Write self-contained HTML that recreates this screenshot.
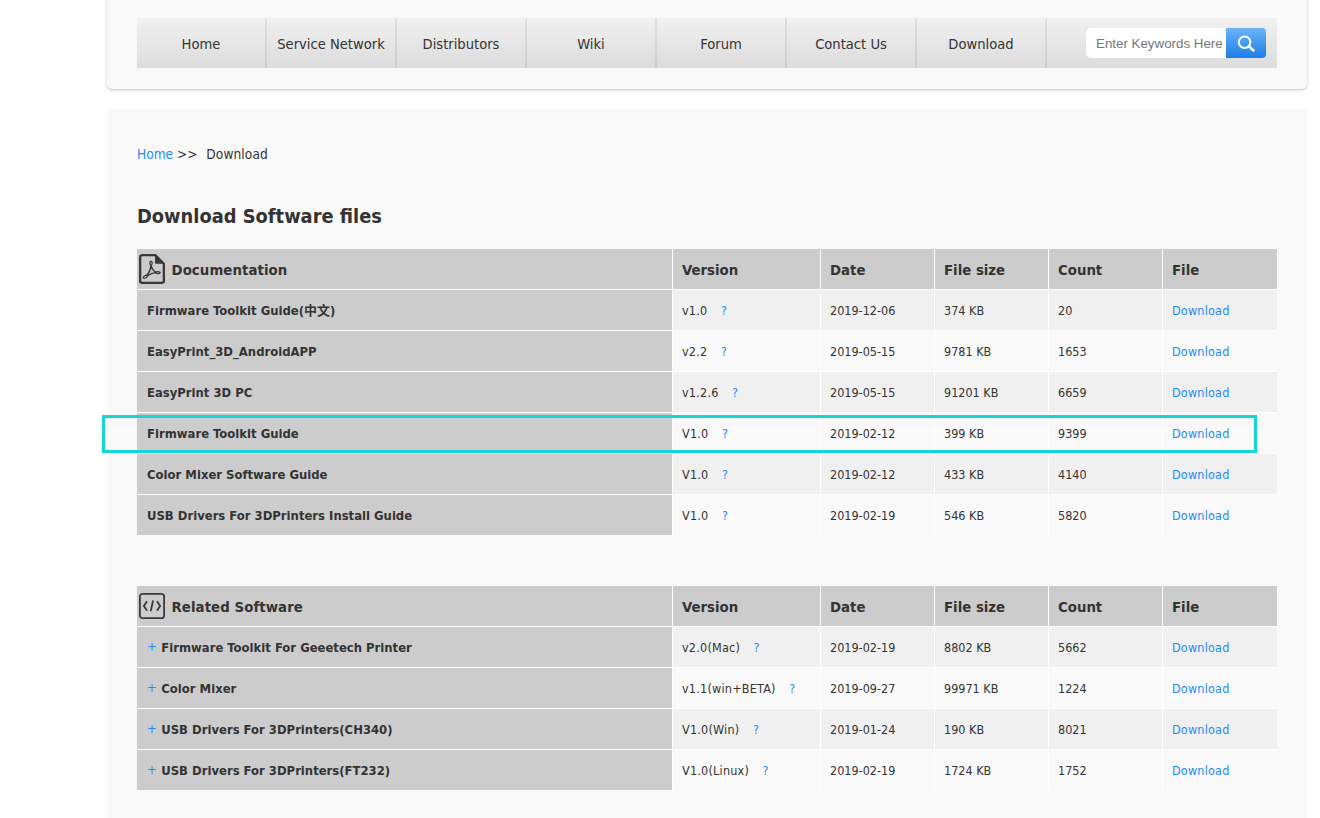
<!DOCTYPE html>
<html lang="en">
<head>
<meta charset="utf-8">
<title>Download Software files</title>
<style>
*{box-sizing:border-box;}
html,body{margin:0;padding:0;background:#fff;}
body{width:1320px;height:818px;overflow:hidden;position:relative;font-family:"DejaVu Sans Condensed","Liberation Sans","Noto Sans CJK SC",sans-serif;color:#333;font-size:13px;}
a{color:#1e8af8;text-decoration:none;}
.top{position:absolute;left:107px;top:-10px;width:1200px;height:99px;background:#f9f9f9;border-radius:0 0 5px 5px;box-shadow:0 1px 3px rgba(0,0,0,.25);}
.nav{position:absolute;left:30px;top:28px;width:1140px;height:50px;background:linear-gradient(#f1f1f1,#dcdcdc);}
.nav ul{list-style:none;margin:0;padding:0;}
.nav li{float:left;width:130px;height:50px;line-height:52px;text-align:center;font-size:14.6px;color:#333;border-right:2px solid rgba(0,0,0,.075);}
.search{position:absolute;left:949px;top:10px;width:180px;height:30px;}
.search .inp{position:absolute;left:0;top:0;width:140px;height:30px;background:#fff;border-radius:5px 0 0 5px;font-family:"Liberation Sans",sans-serif;font-size:13.33px;line-height:30px;color:#777;padding:1px 0 0 10px;white-space:nowrap;overflow:hidden;}
.search .btn{position:absolute;left:140px;top:0;width:40px;height:30px;border-radius:0 4px 4px 0;background:linear-gradient(#6db3f9,#1b7ee6);}
.main{position:absolute;left:107px;top:109px;width:1200px;height:720px;background:#f9f9f9;}
.crumb{position:absolute;left:30px;top:36px;font-size:13.6px;line-height:18px;color:#333;white-space:nowrap;}
h1{position:absolute;left:30px;top:94px;margin:0;font-size:19.85px;line-height:28px;font-weight:bold;color:#333;white-space:nowrap;}
table{position:absolute;left:30px;border-collapse:separate;border-spacing:0;width:1140px;table-layout:fixed;}
td,th{height:41px;padding:1px 0 0 9px;border-bottom:1px solid #fff;border-right:1px solid #fff;text-align:left;vertical-align:middle;font-size:12.5px;line-height:16px;font-weight:normal;white-space:nowrap;}
td:last-child,th:last-child{border-right:0;}
th{background:#ccc;font-weight:bold;font-size:14.8px;line-height:18px;padding-top:2px;}
td:first-child{background:#ccc;font-weight:bold;font-size:12.95px;padding-left:10px;padding-top:1px;}
tr:nth-child(even) td{background:#f0f0f0;}
tr:nth-child(odd) td{background:#f9f9f9;}
tr td:first-child{background:#ccc !important;}
tr:last-child td{border-bottom:0;height:40px;}
th:first-child{padding-left:34.5px;position:relative;letter-spacing:.08px;}
th svg{position:absolute;left:2px;}
.q{margin-left:13.5px;}
td a{letter-spacing:.2px;}
td:nth-child(2){letter-spacing:.22px;}
.plus{position:relative;top:-1px;color:#1e8af8;font-weight:normal;margin-right:4.5px;}
.hl{position:absolute;left:102px;top:415px;width:1155px;height:38px;border:3px solid #14d6d6;}
</style>
</head>
<body>
<div class="top">
  <div class="nav">
    <ul>
      <li>Home</li><li>Service Network</li><li>Distributors</li><li>Wiki</li><li>Forum</li><li>Contact Us</li><li>Download</li>
    </ul>
    <div class="search">
      <div class="inp">Enter Keywords Here</div>
      <div class="btn"><svg width="40" height="30" viewBox="0 0 40 30"><circle cx="18.6" cy="14.2" r="5.75" fill="none" stroke="#fff" stroke-width="2"/><path d="M22.900 18.500 L27.600 22.500" stroke="#fff" stroke-width="2.300" stroke-linecap="round"/></svg></div>
    </div>
  </div>
</div>
<div class="main">
  <div class="crumb"><a>Home</a> &gt;&gt; &nbsp;<span style="margin-left:1px;letter-spacing:.1px">Download</span></div>
  <h1>Download Software files</h1>
  <table style="top:140px">
    <colgroup><col style="width:536px"><col style="width:148px"><col style="width:114px"><col style="width:114px"><col style="width:114px"><col style="width:114px"></colgroup>
    <tr><th><svg width="26" height="30" viewBox="0 0 26 30" style="top:5px"><path d="M3.300 1.150H16.300L24.850 9.700V26.700Q24.850 28.850 22.700 28.850H3.300Q1.150 28.850 1.150 26.700V3.300Q1.150 1.150 3.300 1.150Z" fill="none" stroke="#383838" stroke-width="2.300" stroke-linejoin="round"/><path d="M16 1.500V8.700Q16 9.700 17 9.700H24.800Z" fill="#383838"/><g fill="none" stroke="#383838" stroke-width="1.300" stroke-linecap="round"><ellipse cx="12" cy="9.300" rx="1.150" ry="2.100"/><ellipse cx="18.900" cy="18.600" rx="2.300" ry="1"/><ellipse cx="6.300" cy="22.800" rx="2.200" ry="1.200" transform="rotate(-32 6.300 22.800)"/><path d="M12 11.400C11.800 15 9.500 19.500 7.900 21.500M12 11.400C12.500 14 15 17 16.700 18.300M8.300 21.900C11 19.900 14 18.900 16.700 18.700"/></g></svg>Documentation</th><th>Version</th><th>Date</th><th>File size</th><th>Count</th><th>File</th></tr>
    <tr><td>Firmware Toolkit Guide(中文)</td><td>v1.0<a class="q">?</a></td><td>2019-12-06</td><td>374 KB</td><td>20</td><td><a>Download</a></td></tr>
    <tr><td>EasyPrint_3D_AndroidAPP</td><td>v2.2<a class="q">?</a></td><td>2019-05-15</td><td>9781 KB</td><td>1653</td><td><a>Download</a></td></tr>
    <tr><td>EasyPrint 3D PC</td><td>v1.2.6<a class="q">?</a></td><td>2019-05-15</td><td>91201 KB</td><td>6659</td><td><a>Download</a></td></tr>
    <tr><td>Firmware Toolkit Guide</td><td>V1.0<a class="q">?</a></td><td>2019-02-12</td><td>399 KB</td><td>9399</td><td><a>Download</a></td></tr>
    <tr><td>Color Mixer Software Guide</td><td>V1.0<a class="q">?</a></td><td>2019-02-12</td><td>433 KB</td><td>4140</td><td><a>Download</a></td></tr>
    <tr><td>USB Drivers For 3DPrinters Install Guide</td><td>V1.0<a class="q">?</a></td><td>2019-02-19</td><td>546 KB</td><td>5820</td><td><a>Download</a></td></tr>
  </table>
  <table style="top:477px">
    <colgroup><col style="width:536px"><col style="width:148px"><col style="width:114px"><col style="width:114px"><col style="width:114px"><col style="width:114px"></colgroup>
    <tr><th><svg width="26" height="26" viewBox="0 0 26 26" style="top:7px"><rect x="0.900" y="0.900" width="24.200" height="24.200" rx="2.700" fill="none" stroke="#3a3a3a" stroke-width="1.800"/><path d="M7.500 9 4.900 13 7.500 17M18.500 9 21.100 13 18.500 17M13.900 8.400 11.900 17.300" fill="none" stroke="#3a3a3a" stroke-width="1.800" stroke-linecap="square" stroke-linejoin="miter"/></svg>Related Software</th><th>Version</th><th>Date</th><th>File size</th><th>Count</th><th>File</th></tr>
    <tr><td><span class="plus">+</span>Firmware Toolkit For Geeetech Printer</td><td>v2.0(Mac)<a class="q">?</a></td><td>2019-02-19</td><td>8802 KB</td><td>5662</td><td><a>Download</a></td></tr>
    <tr><td><span class="plus">+</span>Color Mixer</td><td>v1.1(win+BETA)<a class="q">?</a></td><td>2019-09-27</td><td>99971 KB</td><td>1224</td><td><a>Download</a></td></tr>
    <tr><td><span class="plus">+</span>USB Drivers For 3DPrinters(CH340)</td><td>V1.0(Win)<a class="q">?</a></td><td>2019-01-24</td><td>190 KB</td><td>8021</td><td><a>Download</a></td></tr>
    <tr><td><span class="plus">+</span>USB Drivers For 3DPrinters(FT232)</td><td>V1.0(Linux)<a class="q">?</a></td><td>2019-02-19</td><td>1724 KB</td><td>1752</td><td><a>Download</a></td></tr>
  </table>
</div>
<div class="hl"></div>
</body>
</html>
